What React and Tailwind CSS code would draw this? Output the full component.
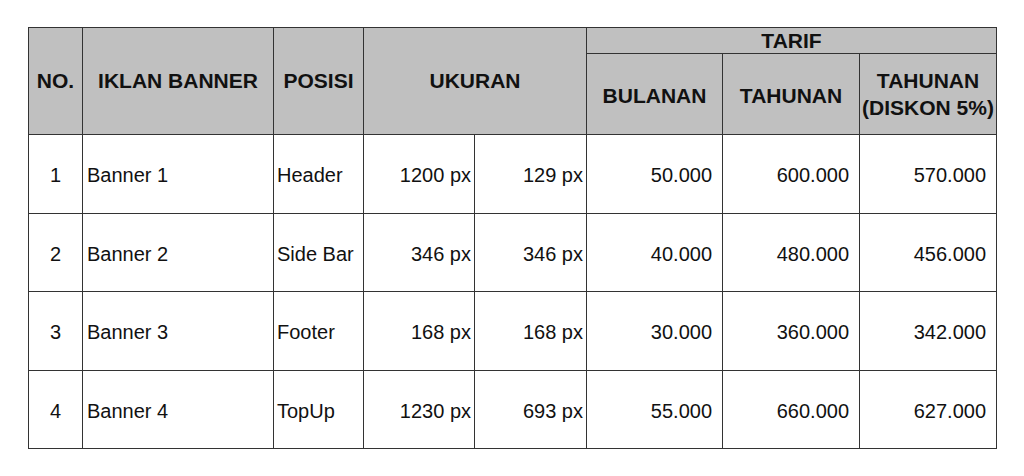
import React from "react";

const rows = [
  { no: 1, name: "Banner 1", pos: "Header", w: "1200 px", h: "129 px", bln: "50.000", thn: "600.000", disk: "570.000" },
  { no: 2, name: "Banner 2", pos: "Side Bar", w: "346 px", h: "346 px", bln: "40.000", thn: "480.000", disk: "456.000" },
  { no: 3, name: "Banner 3", pos: "Footer", w: "168 px", h: "168 px", bln: "30.000", thn: "360.000", disk: "342.000" },
  { no: 4, name: "Banner 4", pos: "TopUp", w: "1230 px", h: "693 px", bln: "55.000", thn: "660.000", disk: "627.000" },
];

// header and body cells share the same grid line
const th = "border border-[#333] bg-[#c0c0c0] font-bold text-[21px] text-center align-middle p-0 whitespace-nowrap";
const td = "border border-[#333] align-middle p-0 pt-[2px]";

export default function App() {
  return (
    <div
      className="w-[1024px] h-[476px] bg-white pl-[28px] pt-[27px] text-[20px] text-[#111]"
      style={{ fontFamily: '"Liberation Sans", Arial, sans-serif' }}
    >
      <table className="table-fixed border-collapse w-[969px]">
        <colgroup>
          <col className="w-[54px]" />
          <col className="w-[191px]" />
          <col className="w-[90px]" />
          <col className="w-[111px]" />
          <col className="w-[112px]" />
          <col className="w-[136px]" />
          <col className="w-[137px]" />
          <col className="w-[137px]" />
        </colgroup>
        <thead>
          <tr className="h-[26px]">
            <th rowSpan={2} className={th}>NO.</th>
            <th rowSpan={2} className={th}>IKLAN BANNER</th>
            <th rowSpan={2} className={th}>POSISI</th>
            <th rowSpan={2} colSpan={2} className={th}>UKURAN</th>
            <th colSpan={3} className={`${th} leading-[24px]`}>TARIF</th>
          </tr>
          <tr className="h-[81px]">
            <th className={`${th} pt-[3px]`}>BULANAN</th>
            <th className={`${th} pt-[3px]`}>TAHUNAN</th>
            <th className={`${th} leading-[27px]`}>
              TAHUNAN
              <br />
              (DISKON 5%)
            </th>
          </tr>
        </thead>
        <tbody>
          {rows.map((r) => (
            <tr key={r.no} className={r.no % 2 === 0 ? "h-[78px]" : "h-[79px]"}>
              <td className={`${td} text-center`}>{r.no}</td>
              <td className={`${td} pl-[4px]`}>{r.name}</td>
              <td className={`${td} pl-[3px] whitespace-nowrap`}>{r.pos}</td>
              <td className={`${td} text-right pr-[3px]`}>{r.w}</td>
              <td className={`${td} text-right pr-[3px]`}>{r.h}</td>
              <td className={`${td} text-right pr-[10px]`}>{r.bln}</td>
              <td className={`${td} text-right pr-[10px]`}>{r.thn}</td>
              <td className={`${td} text-right pr-[10px]`}>{r.disk}</td>
            </tr>
          ))}
        </tbody>
      </table>
    </div>
  );
}
